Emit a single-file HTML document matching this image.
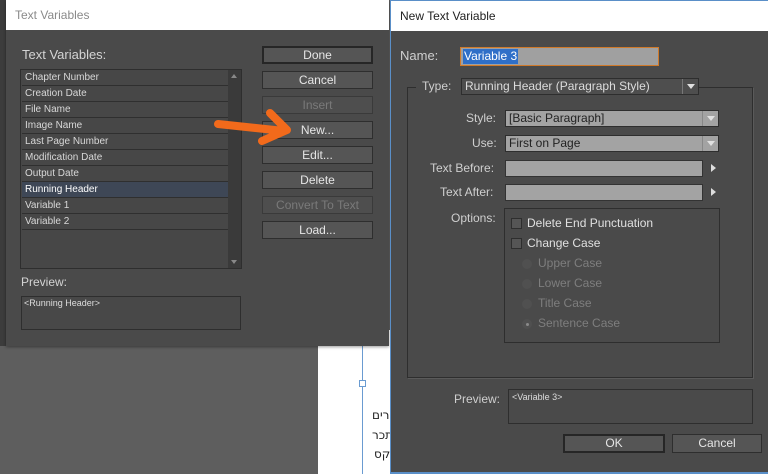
<!DOCTYPE html>
<html><head><meta charset="utf-8"><style>
*{margin:0;padding:0;box-sizing:border-box}
body{width:768px;height:474px;overflow:hidden;background:#5e5e5e;font-family:"Liberation Sans","DejaVu Sans",sans-serif;position:relative}
.a{position:absolute}
.t{color:#d4d4d4;font-size:12px;white-space:nowrap}
.btn{position:absolute;left:262px;width:111px;height:18px;background:#555;border:1px solid #2e2e2e;color:#e6e6e6;font-size:12px;text-align:center;line-height:16px}
.btn.dis{color:#7a7a7a;background:#4e4e4e;border-color:#3a3a3a}
.row{position:absolute;left:1px;width:207px;height:16px;border-bottom:1px solid #2f2f2f;color:#d8d8d8;font-size:10px;line-height:15px;padding-left:3px;background:#474747}
.inp{position:absolute;background:#a3a3a3;border:1px solid #333}
.sel{position:absolute;background:#4e4e4e;border:1px solid #2e2e2e;color:#dcdcdc;font-size:12px;line-height:15px;padding-left:3px}
.sel.l{background:#a3a3a3;color:#222}
.dd{position:absolute;right:0;top:0;width:16px;height:100%;border-left:1px solid #777;}
.dd:after{content:"";position:absolute;left:4px;top:5px;border-left:4px solid transparent;border-right:4px solid transparent;border-top:5px solid #e0e0e0}
.cb{position:absolute;width:11px;height:11px;background:#555;border:1px solid #2e2e2e}
.rd{position:absolute;width:10px;height:10px;border-radius:50%;background:#505050}
.lbl{position:absolute;color:#cfcfcf;font-size:12px;text-align:right;white-space:nowrap}
.dim{color:#7e7e7e}
</style></head><body>
<!-- background page -->
<div class="a" style="left:318px;top:330px;width:80px;height:144px;background:#fff"></div>
<div class="a" style="left:362px;top:330px;width:1px;height:144px;background:#6a9bd1"></div>
<div class="a" style="left:359px;top:380px;width:7px;height:7px;border:1px solid #6a9bd1;background:#fff"></div>
<div class="a" style="left:372px;top:408px;font-size:12px;font-family:'DejaVu Sans',sans-serif;color:#222">רים</div>
<div class="a" style="left:372px;top:428px;font-size:12px;font-family:'DejaVu Sans',sans-serif;color:#222">תכר</div>
<div class="a" style="left:374px;top:447px;font-size:12px;font-family:'DejaVu Sans',sans-serif;color:#222">קס.</div>
<div class="a" style="left:0;top:0;width:6px;height:346px;background:#3c3c3c"></div>

<!-- left dialog -->
<div class="a" style="left:6px;top:0;width:383px;height:346px;background:#4a4a4a;box-shadow:0 1px 3px rgba(0,0,0,.4)">
 <div class="a" style="left:0;top:0;width:383px;height:30px;background:#fff"></div>
 <div class="a" style="left:9px;top:8px;font-size:12px;color:#8a8a8a">Text Variables</div>
</div>
<div class="a t" style="left:22px;top:47px;font-size:13px">Text Variables:</div>
<div class="a" style="left:20px;top:69px;width:222px;height:200px;background:#474747;border:1px solid #2e2e2e">
 <div class="row" style="top:0">Chapter Number</div>
 <div class="row" style="top:16px">Creation Date</div>
 <div class="row" style="top:32px">File Name</div>
 <div class="row" style="top:48px">Image Name</div>
 <div class="row" style="top:64px">Last Page Number</div>
 <div class="row" style="top:80px">Modification Date</div>
 <div class="row" style="top:96px">Output Date</div>
 <div class="row" style="top:112px;background:#3e4756;color:#fff">Running Header</div>
 <div class="row" style="top:128px">Variable 1</div>
 <div class="row" style="top:144px">Variable 2</div>
 <div class="a" style="left:207px;top:0;width:13px;height:198px;background:#3a3a3a"></div>
 <div class="a" style="left:210px;top:4px;border-left:3px solid transparent;border-right:3px solid transparent;border-bottom:4px solid #888"></div>
 <div class="a" style="left:210px;top:190px;border-left:3px solid transparent;border-right:3px solid transparent;border-top:4px solid #888"></div>
</div>
<div class="a t" style="left:21px;top:275px">Preview:</div>
<div class="a" style="left:21px;top:296px;width:220px;height:34px;border:1px solid #2e2e2e;background:#484848"></div>
<div class="a" style="left:24px;top:298px;font-size:9px;color:#ddd">&lt;Running Header&gt;</div>

<div class="btn" style="top:46px;border:2px solid #262626;line-height:14px">Done</div>
<div class="btn" style="top:71px">Cancel</div>
<div class="btn dis" style="top:96px">Insert</div>
<div class="btn" style="top:121px">New...</div>
<div class="btn" style="top:146px">Edit...</div>
<div class="btn" style="top:171px">Delete</div>
<div class="btn dis" style="top:196px">Convert To Text</div>
<div class="btn" style="top:221px">Load...</div>

<svg class="a" style="left:0;top:0" width="390" height="200">
<path d="M218 124 L284 131 M270 113 L287 130 L262 141" fill="none" stroke="#f26a1b" stroke-width="8" stroke-linecap="round" stroke-linejoin="round"/>
</svg>

<!-- right dialog -->
<div class="a" style="left:390px;top:0;width:378px;height:474px;background:#4a4a4a;border-left:1px solid #5a8fc8;border-top:1px solid #5a8fc8;border-bottom:2px solid #5a8fc8">
 <div class="a" style="left:0;top:0;width:378px;height:30px;background:#fff"></div>
 <div class="a" style="left:9px;top:8px;font-size:12px;color:#222">New Text Variable</div>
</div>
<div class="lbl" style="left:400px;top:48px;font-size:13px">Name:</div>
<div class="inp" style="left:460px;top:47px;width:199px;height:19px;border:1px solid #d07a2a;background:#a0a0a0"></div>
<div class="a" style="left:463px;top:49px;height:15px;padding:0 1px;background:#2f6fc8;color:#fff;font-size:12px;line-height:15px">Variable 3</div>

<div class="a" style="left:407px;top:87px;width:346px;height:291px;border:1px solid #2e2e2e;box-shadow:1px 1px 0 #5a5a5a"></div>
<div class="a" style="left:416px;top:79px;width:46px;height:16px;background:#4a4a4a"></div>
<div class="lbl" style="left:422px;top:79px">Type:</div>
<div class="sel" style="left:461px;top:78px;width:238px;height:17px">Running Header (Paragraph Style)<div class="dd"></div></div>

<div class="lbl" style="left:466px;top:111px">Style:</div>
<div class="sel l" style="left:505px;top:110px;width:214px;height:17px">[Basic Paragraph]<div class="dd" style="background:#a3a3a3;border-left:1px solid #888"></div></div>
<div class="lbl" style="left:472px;top:136px">Use:</div>
<div class="sel l" style="left:505px;top:135px;width:214px;height:17px">First on Page<div class="dd" style="background:#a3a3a3;border-left:1px solid #888"></div></div>
<div class="lbl" style="left:430px;top:161px">Text Before:</div>
<div class="inp" style="left:505px;top:160px;width:198px;height:17px"></div>
<div class="a" style="left:711px;top:164px;border-top:4px solid transparent;border-bottom:4px solid transparent;border-left:5px solid #ddd"></div>
<div class="lbl" style="left:440px;top:185px">Text After:</div>
<div class="inp" style="left:505px;top:184px;width:198px;height:17px"></div>
<div class="a" style="left:711px;top:188px;border-top:4px solid transparent;border-bottom:4px solid transparent;border-left:5px solid #ddd"></div>
<div class="lbl" style="left:451px;top:211px">Options:</div>
<div class="a" style="left:504px;top:208px;width:216px;height:135px;border:1px solid #2e2e2e"></div>
<div class="cb" style="left:511px;top:218px"></div>
<div class="a t" style="left:527px;top:216px;color:#e0e0e0">Delete End Punctuation</div>
<div class="cb" style="left:511px;top:238px"></div>
<div class="a t" style="left:527px;top:236px;color:#e0e0e0">Change Case</div>
<div class="rd" style="left:522px;top:259px"></div><div class="a t dim" style="left:538px;top:256px">Upper Case</div>
<div class="rd" style="left:522px;top:279px"></div><div class="a t dim" style="left:538px;top:276px">Lower Case</div>
<div class="rd" style="left:522px;top:299px"></div><div class="a t dim" style="left:538px;top:296px">Title Case</div>
<div class="rd" style="left:522px;top:319px"></div><div class="a" style="left:526px;top:323px;width:3px;height:3px;border-radius:50%;background:#8a8a8a"></div><div class="a t dim" style="left:538px;top:316px">Sentence Case</div>

<div class="lbl" style="left:454px;top:392px">Preview:</div>
<div class="a" style="left:508px;top:389px;width:245px;height:35px;border:1px solid #2e2e2e"></div>
<div class="a" style="left:512px;top:392px;font-size:9px;color:#ddd">&lt;Variable 3&gt;</div>
<div class="a" style="left:563px;top:434px;width:102px;height:19px;background:#555;border:2px solid #262626;color:#e6e6e6;font-size:12px;text-align:center;line-height:15px">OK</div>
<div class="a" style="left:672px;top:434px;width:90px;height:19px;background:#555;border:1px solid #2e2e2e;color:#e6e6e6;font-size:12px;text-align:center;line-height:17px">Cancel</div>
</body></html>
